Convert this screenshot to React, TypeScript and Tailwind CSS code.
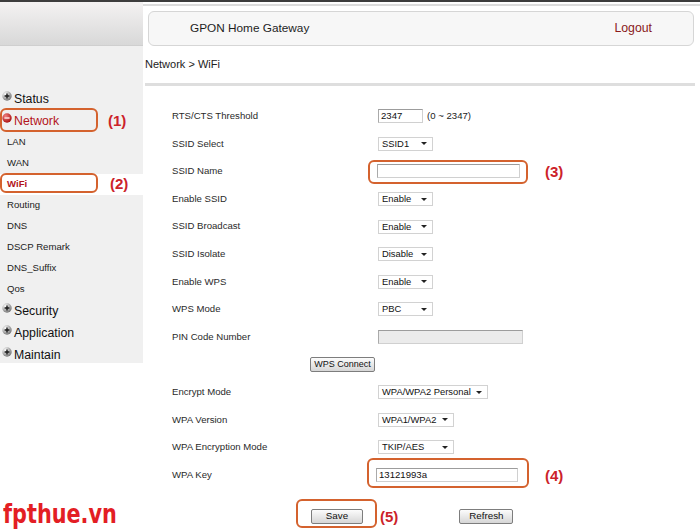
import React from "react";

const PlusIcon = () => (
  <svg width="10" height="10" viewBox="0 0 10 10" className="shrink-0 -mt-[6px]">
    <defs>
      <radialGradient id="plusBall" cx="35%" cy="30%" r="75%">
        <stop offset="0" stopColor="#ffffff" />
        <stop offset="1" stopColor="#707070" />
      </radialGradient>
    </defs>
    <circle cx="5" cy="5" r="4.7" fill="url(#plusBall)" />
    <path d="M2.6 5h4.8M5 2.6v4.8" stroke="#1a1a1a" strokeWidth="1.4" />
  </svg>
);

const MinusIcon = () => (
  <svg width="10" height="10" viewBox="0 0 10 10" className="shrink-0 -mt-[7px]">
    <defs>
      <radialGradient id="minusBall" cx="35%" cy="30%" r="75%">
        <stop offset="0" stopColor="#f08080" />
        <stop offset="1" stopColor="#a80d0d" />
      </radialGradient>
    </defs>
    <circle cx="5" cy="5" r="4.7" fill="url(#minusBall)" />
    <path d="M2.4 5h5.2" stroke="#ffe0e0" strokeWidth="1.5" />
  </svg>
);

const Mark = ({ children, className = "" }: { children: React.ReactNode; className?: string }) => (
  <span className={`font-bold text-[15px] text-[#cc2229] leading-none ${className}`}>{children}</span>
);

const TopItem = ({ label, open }: { label: string; open?: boolean }) => (
  <div className="flex h-[22px] items-center gap-[2px] pl-[2px] text-[12.3px]">
    {open ? <MinusIcon /> : <PlusIcon />}
    <span className={open ? "text-[#b3141b]" : "text-[#111]"}>{label}</span>
  </div>
);

const Select = ({ value, w }: { value: string; w: string }) => (
  <div className={`${w} flex h-[14px] items-center justify-between gap-[4px] border border-[#d2d2d2] bg-white pl-[3px] pr-[5px] text-[9.4px] whitespace-nowrap text-[#111]`}>
    <span>{value}</span>
    <span className="h-0 w-0 shrink-0 border-t-[3px] border-r-[3px] border-l-[3px] border-t-[#222] border-r-transparent border-l-transparent" />
  </div>
);

const TextBox = ({ value = "", w, disabled }: { value?: string; w: string; disabled?: boolean }) => (
  <div
    className={`${w} h-[14px] border border-[#d0d0d0] border-t-[#9c9c9c] border-l-[#aaaaaa] pl-[2px] text-[9.6px] leading-[12px] text-[#111] ${
      disabled ? "bg-[#ebebeb]" : "bg-white"
    }`}
  >
    {value}
  </div>
);

const Btn = ({ label, w, size = "text-[9.8px]" }: { label: string; w: string; size?: string }) => (
  <button
    type="button"
    className={`${w} ${size} flex h-[15px] items-center justify-center rounded-[2px] border border-[#7d7d7d] bg-linear-to-b from-[#fcfcfc] to-[#d6d6d6] whitespace-nowrap text-[#111]`}
  >
    {label}
  </button>
);

const rows: { label: string; control: React.ReactNode }[] = [
  {
    label: "RTS/CTS Threshold",
    control: (
      <div className="flex items-center gap-[4px]">
        <TextBox value="2347" w="w-[45px]" />
        <span className="text-[9.6px] text-[#222]">(0 ~ 2347)</span>
      </div>
    ),
  },
  { label: "SSID Select", control: <Select value="SSID1" w="w-[55px]" /> },
  {
    label: "SSID Name",
    control: (
      <div className="-ml-[1px] flex items-center">
        <div className="relative">
          <TextBox w="w-[143px]" />
          <div className="absolute -top-[4px] -right-[8px] -bottom-[6px] -left-[9px] rounded-[6px] border-2 border-[#d4622e]" />
        </div>
        <Mark className="ml-[25px]">(3)</Mark>
      </div>
    ),
  },
  { label: "Enable SSID", control: <Select value="Enable" w="w-[55px]" /> },
  { label: "SSID Broadcast", control: <Select value="Enable" w="w-[55px]" /> },
  { label: "SSID Isolate", control: <Select value="Disable" w="w-[55px]" /> },
  { label: "Enable WPS", control: <Select value="Enable" w="w-[55px]" /> },
  { label: "WPS Mode", control: <Select value="PBC" w="w-[55px]" /> },
  { label: "PIN Code Number", control: <TextBox w="w-[145px]" disabled /> },
];

const rows2: { label: string; control: React.ReactNode }[] = [
  { label: "Encrypt Mode", control: <Select value="WPA/WPA2 Personal" w="w-[110px]" /> },
  { label: "WPA Version", control: <Select value="WPA1/WPA2" w="w-[76px]" /> },
  { label: "WPA Encryption Mode", control: <Select value="TKIP/AES" w="w-[76px]" /> },
  {
    label: "WPA Key",
    control: (
      <div className="-ml-[2px] flex items-center">
        <div className="relative">
          <TextBox value="13121993a" w="w-[142px]" />
          <div className="absolute -top-[10px] -right-[11px] -bottom-[6px] -left-[9px] rounded-[6px] border-2 border-[#d4622e]" />
        </div>
        <Mark className="ml-[27px]">(4)</Mark>
      </div>
    ),
  },
];

const FormRow = ({ label, control }: { label: string; control: React.ReactNode }) => (
  <div className="flex h-[27.6px] items-center pl-[29px]">
    <div className="w-[206px] shrink-0 text-[9.6px] text-[#2a2a2a]">{label}</div>
    {control}
  </div>
);

const subItems = ["LAN", "WAN", "WiFi", "Routing", "DNS", "DSCP Remark", "DNS_Suffix", "Qos"];

export default function App() {
  return (
    <div className="relative h-[529px] w-[700px] overflow-hidden bg-white font-['Liberation_Sans',Arial,sans-serif] text-[#222]">
      <div className="h-[2px] bg-[#3d3d3d]" />
      <div className="flex">
        <aside className="w-[143px] shrink-0">
          <div className="h-[44px] border-b border-[#cfcfcf] bg-linear-to-b from-[#f4f2f2] to-[#d8d8d8]" />
          <div className="h-[317px] bg-[#f0f0f0] pt-[42px]">
            <TopItem label="Status" />
            <div className="relative">
              <TopItem label="Network" open />
              <div className="absolute -top-[2px] left-0 h-[24px] w-[98px] rounded-[6px] border-2 border-[#d4622e]" />
              <Mark className="absolute top-[3px] left-[108px]">(1)</Mark>
            </div>
            {subItems.map((s) =>
              s === "WiFi" ? (
                <div key={s} className="relative flex h-[21px] items-center bg-white pl-[7px] text-[9.6px] font-bold text-[#b3141b]">
                  {s}
                  <div className="absolute -top-[1px] left-0 h-[20px] w-[98px] rounded-[6px] border-2 border-[#d4622e]" />
                  <Mark className="absolute top-[2px] left-[110px]">(2)</Mark>
                </div>
              ) : (
                <div key={s} className="flex h-[21px] items-center pl-[7px] text-[9.6px] text-[#222]">
                  {s}
                </div>
              )
            )}
            <TopItem label="Security" />
            <TopItem label="Application" />
            <TopItem label="Maintain" />
          </div>
        </aside>

        <main className="flex-1">
          <div className="mt-[2px] h-[2px] bg-[#dcdcdc]" />
          <div className="mt-[5px] mr-[6px] ml-[5px] flex h-[35px] items-center justify-between rounded-[6px] border border-[#d6d6d6] bg-[#f7f7f7] pr-[41px] pl-[41px]">
            <span className="text-[11.8px] text-[#1e1e1e]">GPON Home Gateway</span>
            <span className="text-[12.3px] text-[#8a1a1a]">Logout</span>
          </div>
          <div className="flex h-[37px] items-center pl-[2px] text-[11px] text-[#222]">Network &gt; WiFi</div>
          <div className="mr-[5px] ml-[2px] h-[3px] bg-[#dedede]" />

          <div className="mt-[16.5px]">
            {rows.map((r) => (
              <FormRow key={r.label} label={r.label} control={r.control} />
            ))}
            <div className="flex h-[27.6px] items-center pl-[167px]">
              <Btn label="WPS Connect" w="w-[65px]" size="text-[9px]" />
            </div>
            {rows2.map((r) => (
              <FormRow key={r.label} label={r.label} control={r.control} />
            ))}
            <div className="mt-[13.5px] flex h-[27.6px] items-center pl-[168px]">
              <div className="relative">
                <Btn label="Save" w="w-[52px]" />
                <div className="absolute -top-[10px] -right-[14px] -bottom-[4px] -left-[15px] rounded-[6px] border-2 border-[#d4622e]" />
              </div>
              <Mark className="ml-[17px]">(5)</Mark>
              <div className="ml-[61px]">
                <Btn label="Refresh" w="w-[54px]" />
              </div>
            </div>
          </div>
        </main>
      </div>

      <div className="absolute top-[499px] left-[3px] origin-left scale-x-[0.8] font-['DejaVu_Sans',sans-serif] text-[26px] leading-[30px] font-bold text-[#e31e24]">
        fpthue.vn
      </div>
    </div>
  );
}
